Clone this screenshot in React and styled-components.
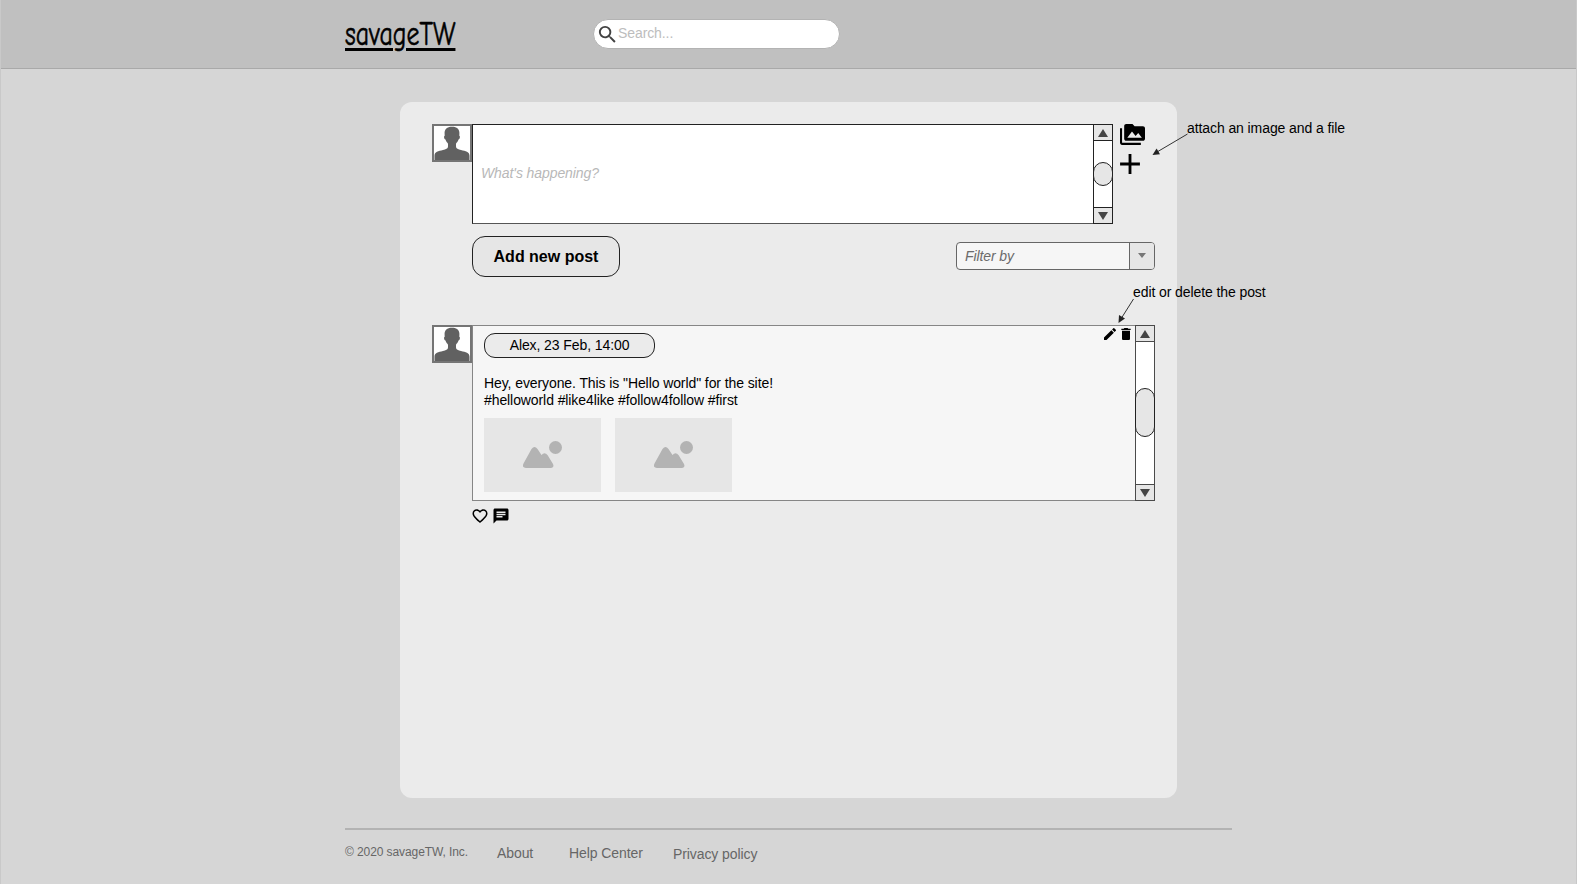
import React from "react";
import styled, { createGlobalStyle } from "styled-components";
import { MdPermMedia, MdAdd, MdEdit, MdDelete, MdFavoriteBorder, MdChat, MdSearch } from "react-icons/md";

const GlobalStyle = createGlobalStyle`
  *, *::before, *::after { box-sizing: border-box; }
  body { margin: 0; background: #d6d6d6; font-family: "Liberation Sans", Arial, sans-serif; font-size: 14px; letter-spacing: -0.09px; color: #000; }
  svg { display: block; flex: none; }
`;

const Page = styled.div`
  position: relative;
  display: flex;
  flex-direction: column;
  width: 1577px;
  height: 884px;
  overflow: hidden;
  background: #d6d6d6;
  border-left: 1px solid #c9c9c9;
  border-right: 1px solid #c9c9c9;
`;

const Header = styled.header`
  display: flex;
  align-items: flex-start;
  height: 69px;
  margin: 0 -1px;
  padding: 0 0 0 344px;
  background: #c0c0c0;
  border: solid #a9a9a9;
  border-width: 0 1px 1px;
`;

const Logo = styled.a`
  width: 248px;
  padding-top: 15px;
  font-family: "Comic Neue", "Indie Flower", "Liberation Sans", sans-serif;
  font-size: 34px;
  line-height: 38px;
  letter-spacing: 0;
  white-space: nowrap;
  -webkit-text-stroke: 0.6px #000;
  text-decoration: underline;
  text-decoration-thickness: 2.5px;
  text-underline-offset: 3px;
  transform: scaleX(0.762);
  transform-origin: left;
`;

const SearchBox = styled.label`
  display: flex;
  align-items: center;
  width: 247px;
  height: 30px;
  margin-top: 19px;
  padding: 0 0 2px 2px;
  border: 1px solid #b3b3b3;
  border-radius: 16px;
  background: #fff;
  color: #bdbdbd;
  svg { color: #424242; margin: 2px -1px 0 0; }
`;

const Panel = styled.main`
  display: flex;
  flex-direction: column;
  width: 777px;
  height: 696px;
  margin: 33px 0 0 399px;
  padding: 22px 0 0 32px;
  border-radius: 12px;
  background: #ebebeb;
`;

const Row = styled.div`
  display: flex;
  align-items: flex-start;
`;

const AvatarFrame = styled.div`
  width: 40px;
  height: 38px;
  border: 2px solid #757575;
  background: #fff;
`;

const Composer = styled.div`
  display: flex;
  justify-content: space-between;
  width: 641px;
  height: 100px;
  border: 1px solid #222;
  border-bottom-color: #555;
  background: #fff;
`;

const Placeholder = styled.span`
  align-self: center;
  padding: 0 0 2px 8px;
  font-style: italic;
  color: #b8b8b8;
`;

const Track = styled.div`
  display: flex;
  flex-direction: column;
  align-items: stretch;
  width: 20px;
  margin: -1px;
  border: 1px solid ${(p) => p.$line};
  background: #fff;
`;

const Step = styled.div`
  display: flex;
  align-items: center;
  justify-content: center;
  height: 16px;
  border: solid ${(p) => p.$line};
  border-width: ${(p) => (p.$down ? "1px 0 0" : "0 0 1px")};
  background: #e6e6e6;
`;

const Lane = styled.div`
  flex: 1;
  padding-top: ${(p) => p.$offset}px;
`;

const Thumb = styled.div`
  height: ${(p) => p.$size}px;
  margin: 0 -1px;
  border: 1px solid #222;
  border-radius: 10px;
  background: #e6e6e6;
`;

const Tools = styled.div`
  display: flex;
  flex-direction: column;
  margin-top: -2px;
  padding-left: 7px;
`;

const AddIcon = styled(MdAdd)`
  margin-left: -7px;
`;

const Actions = styled.div`
  display: flex;
  justify-content: space-between;
  align-items: center;
  width: 683px;
  height: 41px;
  margin: 12px 0 0 40px;
`;

const PostButton = styled.button`
  width: 148px;
  height: 41px;
  padding: 0;
  border: 1px solid #222;
  border-radius: 13px;
  background: #e6e6e6;
  color: #000;
  font: bold 16px "Liberation Sans", Arial, sans-serif;
`;

const Filter = styled.div`
  display: flex;
  width: 199px;
  height: 28px;
  margin-top: -2px;
  border: 1px solid #666;
  border-radius: 4px;
  background: #f6f6f6;
  overflow: hidden;
`;

const FilterLabel = styled.span`
  flex: 1;
  padding-left: 8px;
  line-height: 26px;
  font-style: italic;
  color: #6b6b6b;
`;

const FilterArrow = styled.span`
  display: flex;
  align-items: center;
  justify-content: center;
  width: 25px;
  border-left: 1px solid #666;
  background: #e6e6e6;
`;

const PostRow = styled(Row)`
  margin-top: 48px;
`;

const Post = styled.article`
  display: flex;
  width: 683px;
  height: 176px;
  border: 1px solid #868686;
  background: #f6f6f6;
`;

const PostBody = styled.div`
  flex: 1;
  padding: 7px 0 0 11px;
`;

const Meta = styled.div`
  width: 171px;
  height: 25px;
  border: 1px solid #222;
  border-radius: 11px;
  background: #ebebeb;
  text-align: center;
  line-height: 23px;
`;

const Message = styled.p`
  margin: 17px 0 0;
  line-height: 17px;
  white-space: pre;
`;

const Gallery = styled.div`
  display: flex;
  gap: 14px;
  margin-top: 9px;
`;

const Picture = styled.div`
  width: 117px;
  height: 74px;
  background: #e6e6e6;
`;

const PostTools = styled.div`
  display: flex;
  padding: 0 2px 0 0;
`;

const Reactions = styled.div`
  display: flex;
  align-items: center;
  gap: 3px;
  height: 18px;
  margin: 6px 0 0 39px;
`;

const Footer = styled.footer`
  display: flex;
  align-items: flex-start;
  width: 887px;
  margin: 30px 0 0 344px;
  padding-top: 14px;
  border-top: 2px solid #b3b3b3;
  color: #666;
`;

const FooterItem = styled.span`
  width: ${(p) => p.$width}px;
  padding-top: ${(p) => p.$drop || 0}px;
  font-size: ${(p) => p.$size || 14}px;
  line-height: 16px;
  white-space: nowrap;
`;

const Note = styled.div`
  position: absolute;
  left: ${(p) => p.$x}px;
  top: ${(p) => p.$y}px;
  line-height: 16px;
  white-space: nowrap;
`;

const Pointer = styled.svg`
  position: absolute;
  left: ${(p) => p.$x}px;
  top: ${(p) => p.$y}px;
`;

function Avatar() {
  return (
    <AvatarFrame>
      <svg width="36" height="34" viewBox="0 0 36 34" fill="#616161">
        <path d="M18 .8c-5 0-7.600 2.500-7.400 6.700l.1 2.300c-1 0-.8 3.600.8 3.800.4 1.900 1.900 3.100 2.500 4.200v2.700c0 2.200-2.300 2.900-5 3.600C4.300 25.200.5 26 .5 29.800V34h35v-4.200c0-3.800-3.800-4.600-8.500-5.700-2.700-.7-5-1.400-5-3.600v-2.700c.6-1.100 2.100-2.300 2.500-4.200 1.600-.2 1.800-3.800.8-3.800l.1-2.300C25.600 3.300 23 .8 18 .8z" />
      </svg>
    </AvatarFrame>
  );
}

function Scrollbar({ offset, size, line }) {
  return (
    <Track $line={line}>
      <Step $line={line}>
        <svg width="10" height="8" fill="#444"><path d="M5 0l5 8H0z" /></svg>
      </Step>
      <Lane $offset={offset}><Thumb $size={size} /></Lane>
      <Step $down $line={line}>
        <svg width="10" height="8" fill="#444"><path d="M5 8L0 0h10z" /></svg>
      </Step>
    </Track>
  );
}

function PicturePlaceholder() {
  return (
    <Picture>
      <svg width="117" height="74" fill="#b3b3b3">
        <circle cx="71.500" cy="29.500" r="6.500" />
        <path d="M47.500 31q3-4 6 0l4 6q3-3.500 6 0l5.500 9q1.500 3.500-2 4H42q-4.500-.5-2.500-4.500z" />
      </svg>
    </Picture>
  );
}

export default function App() {
  return (
    <>
      <GlobalStyle />
      <Page>
        <Header>
          <Logo>savageTW</Logo>
          <SearchBox><MdSearch size={23} />Search...</SearchBox>
        </Header>
        <Panel>
          <Row>
            <Avatar />
            <Composer>
              <Placeholder>What's happening?</Placeholder>
              <Scrollbar offset={21} size={24} line="#222" />
            </Composer>
            <Tools>
              <MdPermMedia size={25} />
              <AddIcon size={34} />
            </Tools>
          </Row>
          <Actions>
            <PostButton>Add new post</PostButton>
            <Filter>
              <FilterLabel>Filter by</FilterLabel>
              <FilterArrow>
                <svg width="8" height="5" fill="#777"><path d="M0 0h8L4 5z" /></svg>
              </FilterArrow>
            </Filter>
          </Actions>
          <PostRow>
            <Avatar />
            <Post>
              <PostBody>
                <Meta>Alex, 23 Feb, 14:00</Meta>
                <Message>{'Hey, everyone. This is "Hello world" for the site!\n#helloworld #like4like #follow4follow #first'}</Message>
                <Gallery>
                  <PicturePlaceholder />
                  <PicturePlaceholder />
                </Gallery>
              </PostBody>
              <PostTools>
                <MdEdit size={16} />
                <MdDelete size={16} />
              </PostTools>
              <Scrollbar offset={46} size={49} line="#4a4a4a" />
            </Post>
          </PostRow>
          <Reactions>
            <MdFavoriteBorder size={18} />
            <MdChat size={18} />
          </Reactions>
        </Panel>
        <Footer>
          <FooterItem $width={152} $size={12}>© 2020 savageTW, Inc.</FooterItem>
          <FooterItem $width={72} $drop={1}>About</FooterItem>
          <FooterItem $width={104} $drop={1}>Help Center</FooterItem>
          <FooterItem $width={90} $drop={2}>Privacy policy</FooterItem>
        </Footer>
        <Note $x={1186} $y={120}>attach an image and a file</Note>
        <Pointer $x={1150} $y={132} width="38" height="26">
          <path d="M36.500 2L6 20" stroke="#333" fill="none" />
          <path d="M1.500 23L5.600 16.500 9 22.300z" fill="#222" />
        </Pointer>
        <Note $x={1132} $y={284}>edit or delete the post</Note>
        <Pointer $x={1115} $y={297} width="20" height="28">
          <path d="M17.500 2L5.500 21" stroke="#333" fill="none" />
          <path d="M2.500 26L3 18 9 21.500z" fill="#222" />
        </Pointer>
      </Page>
    </>
  );
}
